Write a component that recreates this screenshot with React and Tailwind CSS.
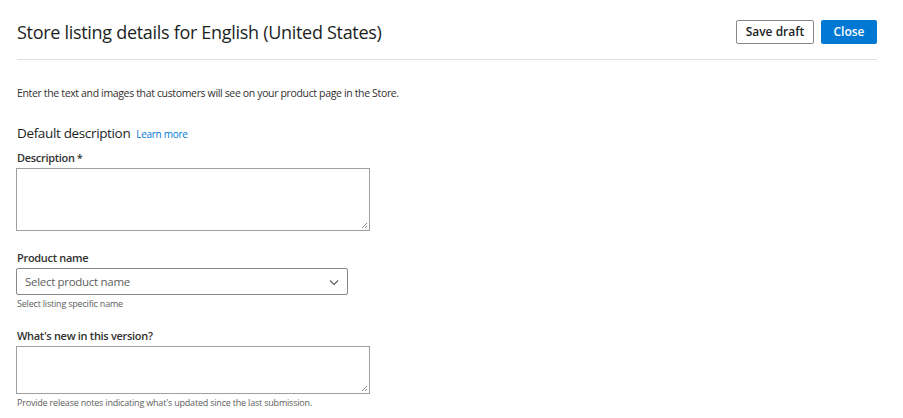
export default function App() {
  return (
    <div className="min-h-screen bg-white text-[#323130] font-['Open_Sans','Noto_Sans',sans-serif]">
      <div className="pl-[17px] pr-[26px]">
        {/* Header */}
        <header className="flex items-center justify-between h-[60px] pt-[5px] border-b border-[#e1dfdd]">
          <h1 className="text-[18px] leading-none tracking-[-0.3px] text-[#201f1e]">
            Store listing details for English (United States)
          </h1>
          <div className="flex gap-[7px]">
            <button className="h-[24px] w-[78px] border border-[#8a8886] rounded-[2px] text-[12px] font-semibold text-[#201f1e] bg-white">
              Save draft
            </button>
            <button className="h-[24px] w-[56px] rounded-[2px] text-[12px] font-semibold text-white bg-[#0078d4]">
              Close
            </button>
          </div>
        </header>

        <p className="mt-[25px] text-[10.5px] tracking-[-0.35px] leading-[16px]">
          Enter the text and images that customers will see on your product page in the Store.
        </p>

        {/* Default description */}
        <div className="mt-[22px] flex items-baseline gap-[6px]">
          <h2 className="text-[13.5px] tracking-[-0.35px] text-[#201f1e]">Default description</h2>
          <a className="text-[10px] tracking-[-0.3px] text-[#0078d4]">Learn more</a>
        </div>

        <label className="block mt-[6px] text-[11px] font-semibold tracking-[-0.3px] leading-[18px]">
          Description<span className="ml-[2px]">*</span>
        </label>
        <div className="relative mt-[1px] -ml-[1px] w-[354px] h-[63px] border border-[#a19f9d]">
          <ResizeGrip />
        </div>

        {/* Product name */}
        <label className="block mt-[18px] text-[11px] font-semibold tracking-[-0.3px] leading-[18px]">
          Product name
        </label>
        <div className="mt-[1px] -ml-[1px] w-[332px] h-[27px] border border-[#8a8886] rounded-[2px] flex items-center justify-between pl-[8px] pr-[7px]">
          <span className="text-[11.5px] tracking-[-0.3px] text-[#605e5c]">Select product name</span>
          <svg width="12" height="12" viewBox="0 0 12 12" fill="none">
            <path d="M2 4.5l4 4 4-4" stroke="#605e5c" strokeWidth="1.1" />
          </svg>
        </div>
        <p className="mt-[2px] text-[9px] tracking-[-0.2px] text-[#605e5c] leading-[14px]">Select listing specific name</p>

        {/* What's new */}
        <label className="block mt-[16px] text-[11px] font-semibold tracking-[-0.3px] leading-[18px]">
          What's new in this version?
        </label>
        <div className="relative mt-[1px] -ml-[1px] w-[354px] h-[48px] border border-[#a19f9d]">
          <ResizeGrip />
        </div>
        <p className="mt-[2px] text-[9px] tracking-[-0.2px] text-[#605e5c] leading-[14px]">
          Provide release notes indicating what's updated since the last submission.
        </p>
      </div>
    </div>
  )
}

function ResizeGrip() {
  return (
    <svg className="absolute right-[1px] bottom-[1px]" width="8" height="8" viewBox="0 0 8 8">
      <path d="M7 2L2 7M7 5L5 7" stroke="#8a8886" strokeWidth="1" />
    </svg>
  )
}
